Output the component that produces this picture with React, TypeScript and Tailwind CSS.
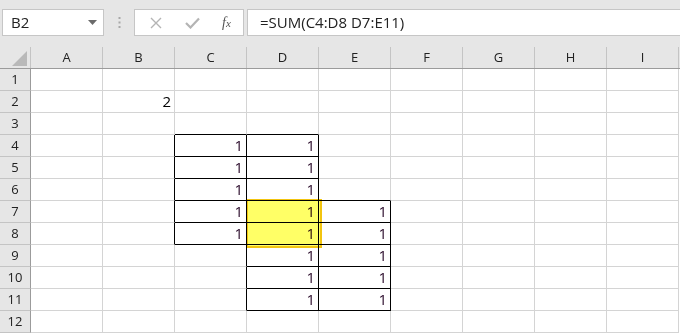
import React from 'react';

const COLS = ['A', 'B', 'C', 'D', 'E', 'F', 'G', 'H', 'I'];
const ROWS = [1, 2, 3, 4, 5, 6, 7, 8, 9, 10, 11, 12];

// cells with a black border box around them
const isBoxed = (r: number, c: number) => {
  if (c === 2) return r >= 4 && r <= 8;
  if (c === 3) return r >= 4 && r <= 11;
  if (c === 4) return r >= 7 && r <= 11;
  return false;
};

const cellValue = (r: number, c: number) => {
  if (r === 2 && c === 1) return '2';
  return isBoxed(r, c) ? '1' : '';
};

const Cell = ({ r, c }: { r: number; c: number }) => {
  const rightBlack = isBoxed(r, c) || isBoxed(r, c + 1);
  const bottomBlack = isBoxed(r, c) || isBoxed(r + 1, c);
  const value = cellValue(r, c);
  return (
    <div
      className={`w-[72px] h-[22px] shrink-0 border-r border-b flex items-center justify-end pr-[3px] text-[15px] leading-none ${
        rightBlack ? 'border-r-black' : 'border-r-[#d4d4d4]'
      } ${bottomBlack ? 'border-b-black' : 'border-b-[#d4d4d4]'} ${value === '1' ? 'text-[#2a0a2a]' : 'text-black'}`}
    >
      {value}
    </div>
  );
};

const App = () => {
  return (
    <div
      className="w-[680px] h-[333px] overflow-hidden bg-white select-none"
      style={{ fontFamily: '"Open Sans", "Noto Sans", "Liberation Sans", sans-serif' }}
    >
      {/* formula bar */}
      <div className="h-[47px] bg-[#e6e6e6] flex items-start pt-[9px] pl-[2px]">
        <div className="w-[102px] h-[27px] bg-white border border-[#c6c6c6] flex items-center justify-between pl-[8px] pr-[6px]">
          <span className="text-[15px] text-[#222]">B2</span>
          <svg width="9" height="5" viewBox="0 0 9 5">
            <path d="M0 0 L9 0 L4.5 5 Z" fill="#6b6b6b" />
          </svg>
        </div>
        <div className="w-[30px] h-[27px] flex items-center justify-center">
          <svg width="3" height="11" viewBox="0 0 3 11">
            <rect x="0.5" y="0" width="2" height="2" fill="#a8a8a8" />
            <rect x="0.5" y="4.5" width="2" height="2" fill="#a8a8a8" />
            <rect x="0.5" y="9" width="2" height="2" fill="#a8a8a8" />
          </svg>
        </div>
        <div className="w-[110px] h-[27px] bg-white border border-[#c6c6c6] flex items-center">
          <div className="w-[37px] flex justify-center pl-[4px]">
            <svg width="12" height="12" viewBox="0 0 12 12">
              <path d="M1 1 L11 11 M11 1 L1 11" stroke="#b4b4b4" strokeWidth="1.4" fill="none" />
            </svg>
          </div>
          <div className="w-[40px] flex justify-center">
            <svg width="15" height="12" viewBox="0 0 15 12">
              <path d="M1 6 L5.5 10.5 L14 1.5" stroke="#b4b4b4" strokeWidth="2.2" fill="none" />
            </svg>
          </div>
          <div className="flex-1 flex justify-center pr-[2px]">
            <span
              className="text-[14px] italic text-[#555] leading-none"
              style={{ fontFamily: '"Liberation Serif", "DejaVu Serif", serif' }}
            >
              f<span className="text-[11px]">x</span>
            </span>
          </div>
        </div>
        <div className="flex-1 h-[27px] ml-[3px] bg-white border border-r-0 border-[#c6c6c6] flex items-center pl-[12px]">
          <span className="text-[15px] text-[#222]">=SUM(C4:D8 D7:E11)</span>
        </div>
      </div>

      {/* column headers */}
      <div className="flex h-[22px] bg-[#e6e6e6] border-b border-b-[#9b9b9b]">
        <div className="w-[31px] shrink-0 border-r border-r-[#c4c4c4] flex items-end justify-end pr-[3px] pb-[2px]">
          <svg width="15" height="15" viewBox="0 0 15 15">
            <path d="M15 0 L15 15 L0 15 Z" fill="#b9b9b9" />
          </svg>
        </div>
        {COLS.map((c) => (
          <div
            key={c}
            className="w-[72px] shrink-0 border-r border-r-[#c4c4c4] flex items-center justify-center text-[13px] text-[#222]"
          >
            {c}
          </div>
        ))}
      </div>

      {/* grid */}
      <div className="relative">
        {ROWS.map((r) => (
          <div key={r} className="flex">
            <div className="w-[31px] h-[22px] shrink-0 bg-[#e6e6e6] border-r border-r-[#9b9b9b] border-b border-b-[#c4c4c4] flex items-center justify-center text-[13px] text-[#222]">
              {r}
            </div>
            {COLS.map((_, c) => (
              <Cell key={c} r={r} c={c} />
            ))}
          </div>
        ))}
        {/* highlighted range D7:D8 */}
        <div className="absolute left-[246px] top-[130px] w-[76px] h-[49px] border-2 border-[#f2c40f] bg-[#ffff66] mix-blend-multiply pointer-events-none" />
      </div>
    </div>
  );
};

export default App;
